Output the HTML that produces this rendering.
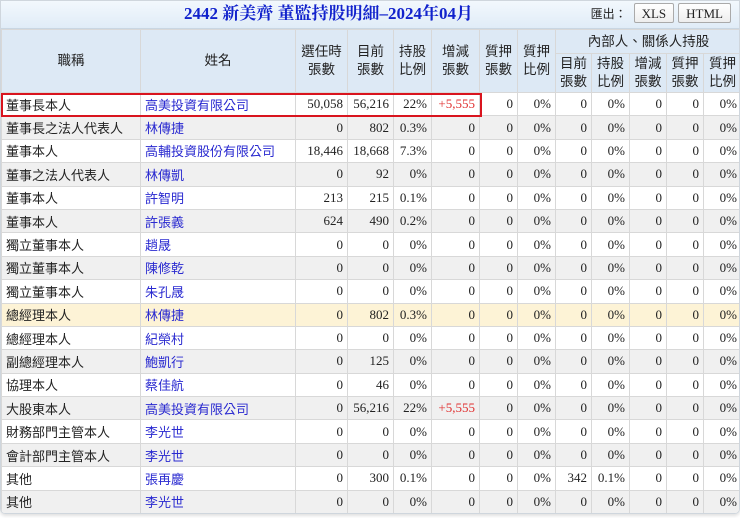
<!DOCTYPE html>
<html><head><meta charset="utf-8"><style>
*{margin:0;padding:0;box-sizing:border-box}
body{width:740px;height:518px;background:#fff;position:relative;overflow:hidden;font-family:"Liberation Sans","Noto Sans CJK TC",sans-serif;font-size:13px;color:#222}
.wrap{position:absolute;left:0;top:0;width:740px;height:514px;border:1px solid #cfd6dd;border-radius:0 0 5px 5px;box-shadow:0 2px 3px rgba(0,0,0,.12);overflow:hidden}
.title{height:28px;background:linear-gradient(#f2f8fd,#e0ecf7);position:relative;border-bottom:1px solid #c9d6e2}
.title h1{position:absolute;left:183px;top:2px;line-height:22px;font:bold 17px/22px "Liberation Serif","Noto Serif CJK SC",serif;color:#1122cc;white-space:nowrap}
.exp{position:absolute;right:8px;top:2px;font-size:12px;display:flex;align-items:center;gap:4px}
.exp span{margin-right:3px}
.btn{border:1px solid #aaa;border-radius:2px;background:linear-gradient(#fff,#eee);font:13px "Liberation Serif",serif;padding:2px 7px;height:20px;line-height:15px}
table{border-collapse:collapse;table-layout:fixed;width:740px}
td,th{border:1px solid #d8d8d8;height:23.4px;padding:0 4px;white-space:nowrap;overflow:hidden}
th{background:#dde9f5;font-weight:normal;font-size:13.5px;line-height:18px;text-align:center;color:#222;padding:0 2px}
td.n{text-align:right;font-family:"Liberation Serif",serif;font-size:13px}
td.a{color:#2a2ad0}
td.r{color:#e03030}
tr.g td{background:#f0f0f0}
tr.y td{background:#fdf3d6}
.box{position:absolute;left:0;top:92px;width:481px;height:24px;border:2px solid #d9141e}
</style></head><body>
<div class="wrap">
<div class="title"><h1>2442 新美齊 董監持股明細–2024年04月</h1>
<div class="exp"><span>匯出：</span><div class="btn">XLS</div><div class="btn">HTML</div></div></div>
<table>
<colgroup><col style="width:139px"><col style="width:155px"><col style="width:52px"><col style="width:46px"><col style="width:38px"><col style="width:48px"><col style="width:38px"><col style="width:38px"><col style="width:36px"><col style="width:38px"><col style="width:37px"><col style="width:37px"><col style="width:38px"></colgroup>
<tr><th rowspan="2" style="height:63px">職稱</th><th rowspan="2">姓名</th><th rowspan="2">選任時<br>張數</th><th rowspan="2">目前<br>張數</th><th rowspan="2">持股<br>比例</th><th rowspan="2">增減<br>張數</th><th rowspan="2">質押<br>張數</th><th rowspan="2">質押<br>比例</th><th colspan="5" style="height:24px">內部人、關係人持股</th></tr>
<tr><th style="height:39px">目前<br>張數</th><th>持股<br>比例</th><th>增減<br>張數</th><th>質押<br>張數</th><th>質押<br>比例</th></tr>
<tr><td>董事長本人</td><td class="a">高美投資有限公司</td><td class="n">50,058</td><td class="n">56,216</td><td class="n">22%</td><td class="n r">+5,555</td><td class="n">0</td><td class="n">0%</td><td class="n">0</td><td class="n">0%</td><td class="n">0</td><td class="n">0</td><td class="n">0%</td></tr>
<tr class="g"><td>董事長之法人代表人</td><td class="a">林傳捷</td><td class="n">0</td><td class="n">802</td><td class="n">0.3%</td><td class="n">0</td><td class="n">0</td><td class="n">0%</td><td class="n">0</td><td class="n">0%</td><td class="n">0</td><td class="n">0</td><td class="n">0%</td></tr>
<tr><td>董事本人</td><td class="a">高輔投資股份有限公司</td><td class="n">18,446</td><td class="n">18,668</td><td class="n">7.3%</td><td class="n">0</td><td class="n">0</td><td class="n">0%</td><td class="n">0</td><td class="n">0%</td><td class="n">0</td><td class="n">0</td><td class="n">0%</td></tr>
<tr class="g"><td>董事之法人代表人</td><td class="a">林傳凱</td><td class="n">0</td><td class="n">92</td><td class="n">0%</td><td class="n">0</td><td class="n">0</td><td class="n">0%</td><td class="n">0</td><td class="n">0%</td><td class="n">0</td><td class="n">0</td><td class="n">0%</td></tr>
<tr><td>董事本人</td><td class="a">許智明</td><td class="n">213</td><td class="n">215</td><td class="n">0.1%</td><td class="n">0</td><td class="n">0</td><td class="n">0%</td><td class="n">0</td><td class="n">0%</td><td class="n">0</td><td class="n">0</td><td class="n">0%</td></tr>
<tr class="g"><td>董事本人</td><td class="a">許張義</td><td class="n">624</td><td class="n">490</td><td class="n">0.2%</td><td class="n">0</td><td class="n">0</td><td class="n">0%</td><td class="n">0</td><td class="n">0%</td><td class="n">0</td><td class="n">0</td><td class="n">0%</td></tr>
<tr><td>獨立董事本人</td><td class="a">趙晟</td><td class="n">0</td><td class="n">0</td><td class="n">0%</td><td class="n">0</td><td class="n">0</td><td class="n">0%</td><td class="n">0</td><td class="n">0%</td><td class="n">0</td><td class="n">0</td><td class="n">0%</td></tr>
<tr class="g"><td>獨立董事本人</td><td class="a">陳修乾</td><td class="n">0</td><td class="n">0</td><td class="n">0%</td><td class="n">0</td><td class="n">0</td><td class="n">0%</td><td class="n">0</td><td class="n">0%</td><td class="n">0</td><td class="n">0</td><td class="n">0%</td></tr>
<tr><td>獨立董事本人</td><td class="a">朱孔晟</td><td class="n">0</td><td class="n">0</td><td class="n">0%</td><td class="n">0</td><td class="n">0</td><td class="n">0%</td><td class="n">0</td><td class="n">0%</td><td class="n">0</td><td class="n">0</td><td class="n">0%</td></tr>
<tr class="y"><td>總經理本人</td><td class="a">林傳捷</td><td class="n">0</td><td class="n">802</td><td class="n">0.3%</td><td class="n">0</td><td class="n">0</td><td class="n">0%</td><td class="n">0</td><td class="n">0%</td><td class="n">0</td><td class="n">0</td><td class="n">0%</td></tr>
<tr><td>總經理本人</td><td class="a">紀榮村</td><td class="n">0</td><td class="n">0</td><td class="n">0%</td><td class="n">0</td><td class="n">0</td><td class="n">0%</td><td class="n">0</td><td class="n">0%</td><td class="n">0</td><td class="n">0</td><td class="n">0%</td></tr>
<tr class="g"><td>副總經理本人</td><td class="a">鮑凱行</td><td class="n">0</td><td class="n">125</td><td class="n">0%</td><td class="n">0</td><td class="n">0</td><td class="n">0%</td><td class="n">0</td><td class="n">0%</td><td class="n">0</td><td class="n">0</td><td class="n">0%</td></tr>
<tr><td>協理本人</td><td class="a">蔡佳航</td><td class="n">0</td><td class="n">46</td><td class="n">0%</td><td class="n">0</td><td class="n">0</td><td class="n">0%</td><td class="n">0</td><td class="n">0%</td><td class="n">0</td><td class="n">0</td><td class="n">0%</td></tr>
<tr class="g"><td>大股東本人</td><td class="a">高美投資有限公司</td><td class="n">0</td><td class="n">56,216</td><td class="n">22%</td><td class="n r">+5,555</td><td class="n">0</td><td class="n">0%</td><td class="n">0</td><td class="n">0%</td><td class="n">0</td><td class="n">0</td><td class="n">0%</td></tr>
<tr><td>財務部門主管本人</td><td class="a">李光世</td><td class="n">0</td><td class="n">0</td><td class="n">0%</td><td class="n">0</td><td class="n">0</td><td class="n">0%</td><td class="n">0</td><td class="n">0%</td><td class="n">0</td><td class="n">0</td><td class="n">0%</td></tr>
<tr class="g"><td>會計部門主管本人</td><td class="a">李光世</td><td class="n">0</td><td class="n">0</td><td class="n">0%</td><td class="n">0</td><td class="n">0</td><td class="n">0%</td><td class="n">0</td><td class="n">0%</td><td class="n">0</td><td class="n">0</td><td class="n">0%</td></tr>
<tr><td>其他</td><td class="a">張再慶</td><td class="n">0</td><td class="n">300</td><td class="n">0.1%</td><td class="n">0</td><td class="n">0</td><td class="n">0%</td><td class="n">342</td><td class="n">0.1%</td><td class="n">0</td><td class="n">0</td><td class="n">0%</td></tr>
<tr class="g"><td>其他</td><td class="a">李光世</td><td class="n">0</td><td class="n">0</td><td class="n">0%</td><td class="n">0</td><td class="n">0</td><td class="n">0%</td><td class="n">0</td><td class="n">0%</td><td class="n">0</td><td class="n">0</td><td class="n">0%</td></tr>
</table>
<div class="box"></div>
</div>
</body></html>
